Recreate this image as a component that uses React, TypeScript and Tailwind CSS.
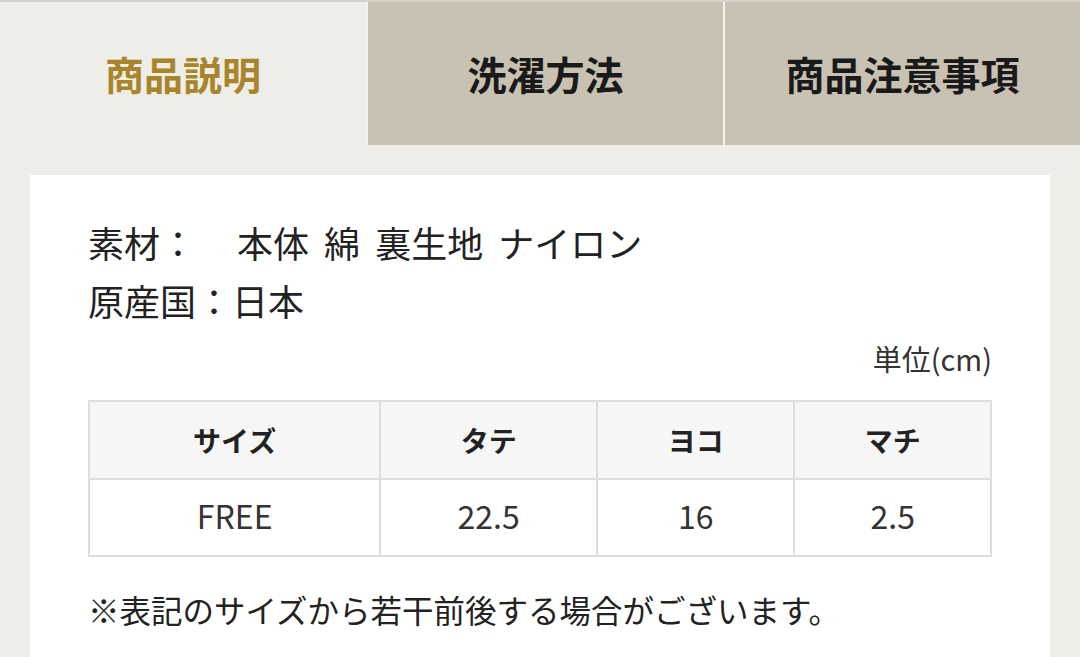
const font = { fontFamily: '"Noto Sans CJK JP", "Noto Sans", sans-serif' }

const tabs = [
  { label: '商品説明', active: true },
  { label: '洗濯方法', active: false },
  { label: '商品注意事項', active: false },
]

const headers = ['サイズ', 'タテ', 'ヨコ', 'マチ']
const values = ['FREE', '22.5', '16', '2.5']

export default function App() {
  return (
    <div
      className="h-[657px] w-[1080px] overflow-hidden bg-[#efede8] text-[#222]"
      style={font}
    >
      <div className="flex h-[145px] border-t-2 border-[#d4d2cc]">
        {tabs.map((t, i) => (
          <div
            key={t.label}
            className={
              'flex items-center justify-center text-[39px] font-bold ' +
              (t.active ? 'w-[366px] bg-[#efede8] text-[#a8852a]' : 'flex-1 bg-[#c9c2b2] text-[#1a1a1a]') +
              (i > 0 ? ' border-l-2 border-[#f4f2ee]' : '')
            }
          >
            {t.label}
          </div>
        ))}
      </div>

      <div className="mx-[30px] mt-[30px] bg-white px-[58px] pt-[38px] pb-10">
        <p className="text-[36px] leading-[58px]">
          素材：<span className="ml-[41px] [word-spacing:7px]">本体 綿 裏生地 ナイロン</span>
        </p>
        <p className="text-[36px] leading-[58px]">原産国：日本</p>

        <p className="mt-[9px] text-right text-[29px] leading-[40px] text-[#333]">単位(cm)</p>

        <table className="mt-[22px] w-[904px] border-collapse border-2 border-[#dddddd] text-center">
          <colgroup>
            <col className="w-[292px]" />
            <col className="w-[217px]" />
            <col className="w-[198px]" />
            <col className="w-[197px]" />
          </colgroup>
          <thead>
            <tr className="h-[78px] bg-[#f6f6f6]">
              {headers.map((h) => (
                <th key={h} className="border-2 border-[#dddddd] text-[28px] font-bold">
                  {h}
                </th>
              ))}
            </tr>
          </thead>
          <tbody>
            <tr className="h-[77px]">
              {values.map((v) => (
                <td key={v} className="border-2 border-[#dddddd] pb-[5px] text-[32px] text-[#333]">
                  {v}
                </td>
              ))}
            </tr>
          </tbody>
        </table>

        <p className="mt-[27px] text-[31.5px] leading-[50px]">
          ※表記のサイズから若干前後する場合がございます。
        </p>
      </div>
    </div>
  )
}
